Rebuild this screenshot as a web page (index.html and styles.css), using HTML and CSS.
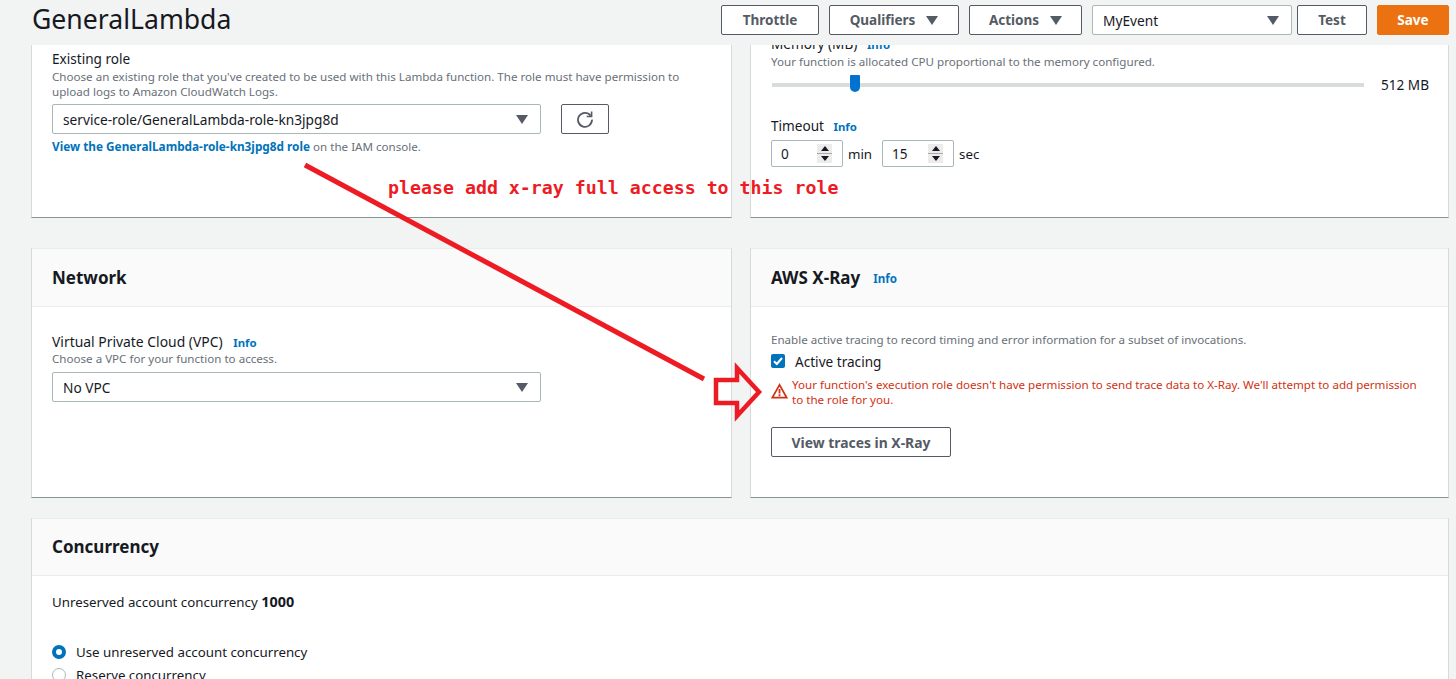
FILE: index.html
```html
<!DOCTYPE html>
<html lang="en">
<head>
    <meta charset="UTF-8">
    <title>GeneralLambda</title>
    <link rel="stylesheet" href="styles.css">
</head>
<body>

    <header class="topbar">
        <h1 class="fn-name">GeneralLambda</h1>
        <div class="actions">
            <button class="btn btn-throttle">Throttle</button>
            <button class="btn btn-qualifiers">Qualifiers <span class="caret"></span></button>
            <button class="btn btn-actions">Actions <span class="caret"></span></button>
            <div class="select select-event"><span>MyEvent</span><span class="caret"></span></div>
            <button class="btn btn-test">Test</button>
            <button class="btn btn-save">Save</button>
        </div>
    </header>

    <main class="content">
        <div class="row row-top">
            <section class="card card-role">
                <div class="label">Existing role</div>
                <p class="hint">Choose an existing role that you've created to be used with this Lambda function. The role must have permission to upload logs to Amazon CloudWatch Logs.</p>
                <div class="role-picker">
                    <div class="select select-wide"><span>service-role/GeneralLambda-role-kn3jpg8d</span><span class="caret"></span></div>
                    <button class="btn btn-refresh" aria-label="Refresh">
                        <svg width="18" height="18" viewBox="0 0 18 18" fill="none" stroke="#545b64" stroke-width="1.8">
                            <path d="M14.6 5.6A7 7 0 1 0 16 9.6"/>
                            <path d="M15.6 1.6v4.9h-4.9" stroke-width="1.6"/>
                        </svg>
                    </button>
                </div>
                <p class="hint role-link"><a href="#">View the GeneralLambda-role-kn3jpg8d role</a> on the IAM console.</p>
            </section>
            <section class="card card-memory">
                <div class="label label-clipped">Memory (MB) <a href="#" class="info">Info</a></div>
                <p class="hint">Your function is allocated CPU proportional to the memory configured.</p>
                <div class="slider-row">
                    <div class="slider"><span class="slider-thumb"></span></div>
                    <span class="slider-value">512 MB</span>
                </div>
                <div class="label timeout-label">Timeout <a href="#" class="info">Info</a></div>
                <div class="timeout">
                    <div class="spin"><span>0</span><span class="spin-btns"><i class="up"></i><i class="down"></i></span></div>
                    <span>min</span>
                    <div class="spin"><span>15</span><span class="spin-btns"><i class="up"></i><i class="down"></i></span></div>
                    <span>sec</span>
                </div>
            </section>
        </div>

        <div class="row row-mid">
            <section class="card">
                <h2 class="card-head">Network</h2>
                <div class="card-body network-body">
                    <div class="label">Virtual Private Cloud (VPC) <a href="#" class="info">Info</a></div>
                    <p class="hint">Choose a VPC for your function to access.</p>
                    <div class="select select-wide"><span>No VPC</span><span class="caret"></span></div>
                </div>
            </section>
            <section class="card">
                <h2 class="card-head">AWS X-Ray <a href="#" class="info">Info</a></h2>
                <div class="card-body xray-body">
                    <p class="hint">Enable active tracing to record timing and error information for a subset of invocations.</p>
                    <div class="check-row">
                        <span class="checkbox">
                            <svg width="14" height="14" viewBox="0 0 14 14" fill="none" stroke="#fff" stroke-width="2"><path d="M3 7.2l2.8 2.8L11 4"/></svg>
                        </span>
                        <span>Active tracing</span>
                    </div>
                    <div class="warning">
                        <svg width="17" height="16" viewBox="0 0 17 16" fill="none" stroke="#d13212" stroke-width="1.7">
                            <path d="M8.5 1.8L1.4 14.6h14.2z"/>
                            <path d="M8.5 6v4.5M8.5 11.3v2" stroke-width="1.8"/>
                        </svg>
                        <p>Your function's execution role doesn't have permission to send trace data to X-Ray. We'll attempt to add permission to the role for you.</p>
                    </div>
                    <button class="btn btn-traces">View traces in X-Ray</button>
                </div>
            </section>
        </div>

        <section class="card card-full">
            <h2 class="card-head">Concurrency</h2>
            <div class="card-body concurrency-body">
                <div class="unreserved">Unreserved account concurrency <b>1000</b></div>
                <div class="radio-row"><span class="radio radio-on"></span>Use unreserved account concurrency</div>
                <div class="radio-row"><span class="radio"></span>Reserve concurrency</div>
            </div>
        </section>
    </main>

    <!-- red markup drawn over the screenshot -->
    <div class="note">please add x-ray full access to this role</div>
    <svg class="markup" width="1456" height="679" viewBox="0 0 1456 679" fill="none" stroke="#ed1c24">
        <path d="M305 165L704 379" stroke-width="5"/>
        <path d="M716 380H737V368L759 392L737 416V403H716Z" stroke-width="4.5"/>
    </svg>

</body>
</html>
```

FILE: styles.css
```css
* {
    box-sizing: border-box;
}
html, body {
    height: 100%;
}
body {
    margin: 0;
    height: 679px;
    overflow: hidden;
    position: relative;
    background-color: #f2f3f3;
    color: #16191f;
    font-family: "Noto Sans", Arial, sans-serif;
    font-size: 13.3px;
}
a {
    color: #0073bb;
    text-decoration: none;
    font-weight: 700;
}
p {
    margin: 0;
}

/* top bar */
.topbar {
    height: 45px;
    padding: 5px 7px 0 32px;
    display: flex;
    justify-content: space-between;
    align-items: flex-start;
}
.fn-name {
    margin: -2px 0 0;
    font-size: 26.6px;
    line-height: 32px;
    font-weight: 400;
}
.actions {
    display: flex;
    align-items: flex-start;
}
.btn {
    height: 30px;
    padding: 0;
    background-color: #fff;
    border: 1px solid #545b64;
    border-radius: 2px;
    color: #545b64;
    font-family: inherit;
    font-size: 13.5px;
    font-weight: 700;
    display: inline-flex;
    align-items: center;
    justify-content: center;
}
.caret {
    width: 0;
    height: 0;
    border-left: 6px solid transparent;
    border-right: 6px solid transparent;
    border-top: 9px solid #545b64;
}
.btn .caret {
    margin-left: 11px;
}
.btn-throttle { width: 98px; margin-right: 10px; }
.btn-qualifiers { width: 130px; margin-right: 10px; }
.btn-actions { width: 113px; margin-right: 10px; }
.btn-test { width: 70px; margin-right: 10px; }
.btn-save {
    width: 72px;
    background-color: #ec7211;
    border-color: #ec7211;
    color: #fff;
}
.select {
    height: 30px;
    padding: 0 12px 0 10px;
    background-color: #fff;
    border: 1px solid #aab7b8;
    border-radius: 2px;
    display: flex;
    align-items: center;
    justify-content: space-between;
    font-size: 13.7px;
}
.select-event {
    width: 200px;
    margin-right: 5px;
}
.select-wide {
    width: 489px;
}

/* cards */
.content {
    padding: 0 7px 0 31px;
}
.row {
    display: grid;
    grid-template-columns: 701px 699px;
    gap: 18px;
}
.row-top {
    height: 173px;
    margin-bottom: 30px;
}
.row-mid {
    height: 250px;
    margin-bottom: 20px;
}
.card {
    background-color: #fff;
    border-left: 1px solid #d5dbdb;
    border-right: 1px solid #d5dbdb;
    border-bottom: 1px solid #879596;
    overflow: hidden;
}
.card-role {
    padding: 6px 20px 0;
}
.card-role .label {
    margin-bottom: 2px;
}
.card-memory {
    padding: 0 20px;
}
.card-head {
    margin: 0;
    height: 59px;
    padding: 0 20px;
    background-color: #fafafa;
    border-bottom: 1px solid #eaeded;
    box-shadow: inset 0 1px 0 #eaeded;
    font-size: 17px;
    font-weight: 700;
    display: flex;
    align-items: center;
    gap: 10px;
}
.card-head .info {
    font-size: 11.6px;
    margin-top: 2px;
    margin-left: 3px;
}
.card-body {
    padding: 26px 20px 0;
}
.label {
    font-size: 13.6px;
    line-height: 16px;
}
.label .info {
    font-size: 11.4px;
    margin-left: 6px;
}
.label-clipped {
    margin-top: -9px;
}
.hint {
    color: #687078;
    font-size: 11.6px;
    line-height: 15px;
}
.role-picker {
    margin-top: 5px;
    display: flex;
    gap: 20px;
}
.btn-refresh {
    width: 48px;
}
.role-link {
    margin-top: 5px;
}
.role-link a {
    font-size: 11.8px;
}

/* memory and timeout */
.card-memory .hint {
    margin-top: 1px;
}
.slider-row {
    margin-top: 7px;
    display: flex;
    align-items: center;
    height: 17px;
}
.slider {
    flex: none;
    margin-left: 1px;
    width: 592px;
    height: 4px;
    background-color: #d9dcdc;
    position: relative;
}
.slider-thumb {
    position: absolute;
    left: 78px;
    top: -8px;
    width: 10px;
    height: 17px;
    background-color: #0073d1;
    border-radius: 1px 1px 5px 5px;
}
.slider-value {
    margin-left: 17px;
    font-size: 13.6px;
    white-space: nowrap;
}
.timeout-label {
    margin-top: 25px;
}
.timeout {
    margin-top: 5px;
    display: flex;
    align-items: center;
    gap: 5px;
}
.spin {
    width: 72px;
    height: 27px;
    padding: 0 10px 0 9px;
    border: 1px solid #aab7b8;
    border-radius: 2px;
    display: flex;
    align-items: center;
    justify-content: space-between;
    font-size: 13.6px;
}
.timeout > span:nth-child(2) {
    margin-right: 5px;
}
.spin-btns {
    width: 15px;
    height: 19px;
    background: linear-gradient(#ececec 9px, #a9a9a9 9px, #a9a9a9 10px, #ececec 10px);
    display: flex;
    flex-direction: column;
    align-items: center;
    justify-content: space-around;
}
.spin-btns i {
    width: 0;
    height: 0;
    border-left: 4px solid transparent;
    border-right: 4px solid transparent;
}
.spin-btns .up { border-bottom: 5px solid #16191f; }
.spin-btns .down { border-top: 5px solid #16191f; }

/* network */
.network-body {
    padding-top: 27px;
}
.network-body .label {
    font-size: 13.9px;
}
.network-body .info {
    margin-left: 7px;
}
.network-body .select {
    margin-top: 6px;
}

/* x-ray */
.xray-body {
    padding-top: 25px;
}
.check-row {
    margin-top: 6px;
    display: flex;
    align-items: center;
    gap: 10px;
    height: 16px;
    font-size: 13.6px;
}
.checkbox {
    width: 14px;
    height: 14px;
    background-color: #0073bb;
    border-radius: 2px;
    display: flex;
}
.warning {
    margin-top: 9px;
    display: flex;
    gap: 4px;
    color: #d13212;
    font-size: 11.6px;
    line-height: 14.5px;
}
.warning svg {
    flex: none;
    margin-top: 5px;
}
.warning p {
    max-width: 632px;
}
.btn-traces {
    margin-top: 20px;
    width: 180px;
    font-size: 13.9px;
}

/* concurrency */
.card-full {
    height: 200px;
}
.card-full .card-head {
    height: 58px;
}
.concurrency-body {
    padding-top: 17px;
}
.unreserved {
    line-height: 18px;
}
.unreserved b {
    font-size: 14.4px;
}
.radio-row {
    display: flex;
    align-items: center;
    gap: 10px;
    height: 18px;
    margin-bottom: 5px;
}
.unreserved + .radio-row {
    margin-top: 32px;
}
.radio {
    width: 14px;
    height: 14px;
    border-radius: 50%;
    border: 1px solid #aab7b8;
    background-color: #fff;
}
.radio-on {
    border: 4px solid #0073bb;
}

/* annotation overlay */
.note {
    position: absolute;
    left: 388px;
    top: 177px;
    color: #ed1c24;
    font-family: "DejaVu Sans Mono", monospace;
    font-size: 18.25px;
    font-weight: 700;
    line-height: 22px;
    white-space: nowrap;
}
.markup {
    position: absolute;
    left: 0;
    top: 0;
    pointer-events: none;
}
```
